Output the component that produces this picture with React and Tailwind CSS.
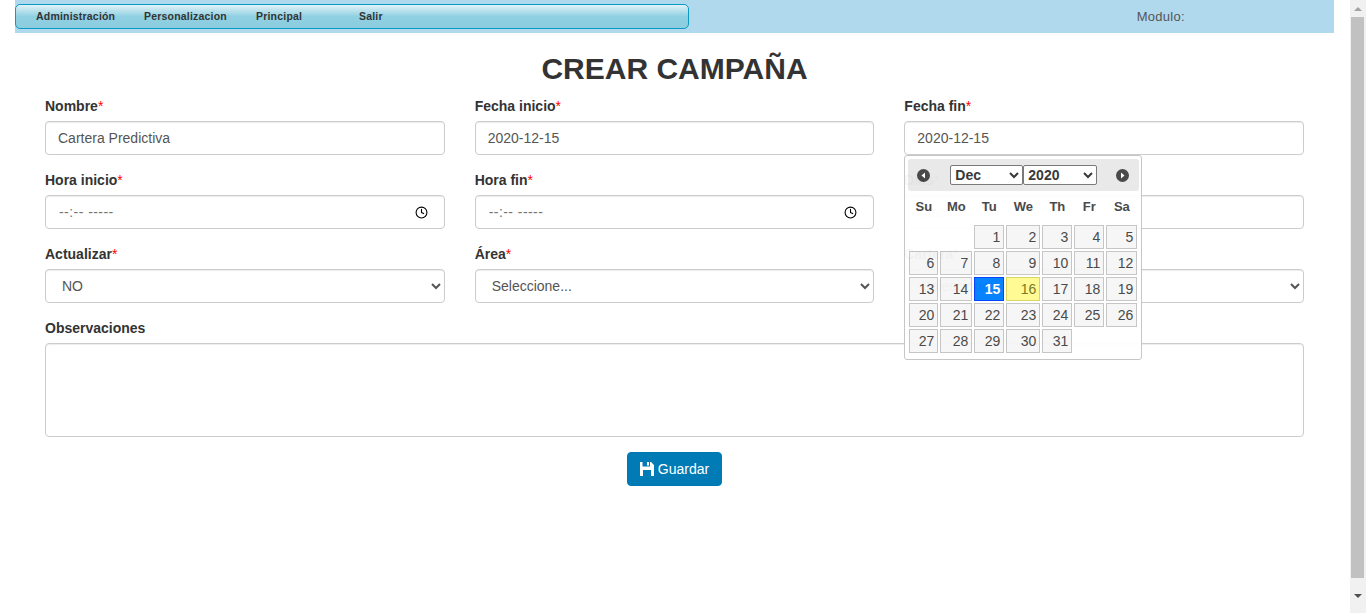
import { Clock } from "lucide-react";

const inputClass =
  "block w-full h-[34px] px-3 text-sm text-[#555] bg-white border border-[#ccc] rounded-[4px] shadow-[inset_0_1px_1px_rgba(0,0,0,0.075)]";

const weekDays = ["Su", "Mo", "Tu", "We", "Th", "Fr", "Sa"];
const days = Array.from({ length: 31 }, (_, i) => i + 1);

const Field = ({ label, required, children, className = "" }) => (
  <div className={`pt-[1px] ${className}`}>
    <label className="block h-5 mb-[5px] text-sm leading-5 font-bold text-[#333]">
      {label}
      {required && <span className="font-normal text-[#f00]">*</span>}
    </label>
    {children}
  </div>
);

const TimeInput = () => (
  <div className={`${inputClass} flex items-center justify-between pr-4`}>
    <span className="pl-[1px] tracking-[0.45px] whitespace-pre text-[#757575]">--:-- -----</span>
    <Clock size={13} strokeWidth={2} className="text-black" />
  </div>
);

const CircleArrow = ({ right }) => (
  <svg width="13" height="13" viewBox="0 0 13 13">
    <circle cx="6.5" cy="6.5" r="6.5" fill="#454545" />
    <path d={right ? "M5 3.5 8.5 6.5 5 9.5Z" : "M8 3.5 4.5 6.5 8 9.5Z"} fill="#fff" />
  </svg>
);

const SaveIcon = () => (
  <svg width="14" height="14" viewBox="0 0 14 14" fill="#fff">
    <path
      fillRule="evenodd"
      d="M0 0H2.5V4.5H10V0H11L14 3V14H0ZM3 8V14H11V8ZM7 0H9V3.5H7Z"
    />
  </svg>
);

const dayClass = (day) => {
  if (day === 15) return "border-[#003eff] bg-[#007fff] text-white font-bold";
  if (day === 16) return "border-[#dad55e] bg-[#fffa90] text-[#777620]";
  return "border-[#c5c5c5] bg-[#f6f6f6] text-[#454545]";
};

const Calendar = () => (
  <div className="absolute left-0 top-full z-10 w-[238px] h-[205px] pl-[3px] pr-[2px] pt-[3px] bg-white border border-[#c5c5c5] rounded-[3px] opacity-[.97]">
    <div className="flex items-center h-8 bg-[#e9e9e9] rounded-[3px]">
      <div className="w-[42px] pl-[9px]">
        <CircleArrow />
      </div>
      <select className="w-[73px] h-5 text-sm font-bold text-[#333] bg-white border border-[#767676] rounded-[2px]">
        <option>Dec</option>
      </select>
      <select className="w-[74px] h-5 text-sm font-bold text-[#333] bg-white border border-[#767676] rounded-[2px]">
        <option>2020</option>
      </select>
      <div className="ml-[19px]">
        <CircleArrow right />
      </div>
    </div>
    <div className="grid grid-cols-[29px_32px_30px_34px_30px_30px_31px] gap-x-[2px] pl-[1px]">
      {weekDays.map((d) => (
        <div key={d} className="h-[34px] text-[13px] leading-[32px] font-bold text-center text-[#454545]">
          {d}
        </div>
      ))}
    </div>
    <div className="grid grid-cols-[29px_32px_30px_34px_30px_30px_31px] auto-rows-[24px] gap-[2px] pl-[1px]">
      <div className="col-span-2" />
      {days.map((day) => (
        <div key={day} className={`border pr-[3px] text-sm leading-[23px] text-right ${dayClass(day)}`}>
          {day}
        </div>
      ))}
    </div>
  </div>
);

const Scrollbar = () => (
  <div className="flex flex-col w-4 h-full bg-[#f1f1f1]">
    <div className="flex items-center justify-center h-[17px]">
      <div className="w-0 h-0 border-x-[4px] border-b-[4px] border-x-transparent border-b-[#a3a3a3]" />
    </div>
    <div className="w-[13px] h-[561px] ml-[1px] bg-[#c1c1c1]" />
    <div className="flex items-center justify-center flex-1">
      <div className="w-0 h-0 border-x-[4px] border-t-[4px] border-x-transparent border-t-[#505050]" />
    </div>
  </div>
);

export default function App() {
  return (
    <div className="flex h-[613px] overflow-hidden bg-white font-['Liberation_Sans',Arial,sans-serif]">
      <div className="w-[1350px] pl-[15px] pr-4">
        <nav className="flex items-center justify-between h-[33px] bg-[#b0d9ee]">
          <ul className="flex items-center w-[674px] h-[25px] text-[10.5px] font-bold tracking-[0.2px] text-[#333] border-[1.5px] border-[#0b9ac4] rounded-[5px] bg-gradient-to-b from-[#e0f2f7] via-[#8fd0e2] via-50% to-[#8bcddf]">
            <li className="w-[128px] pl-5">Administración</li>
            <li className="w-[112px]">Personalizacion</li>
            <li className="w-[103px]">Principal</li>
            <li>Salir</li>
          </ul>
          <span className="mr-[149px] text-[13px] tracking-[0.3px] text-[#555]">Modulo:</span>
        </nav>

        <main className="px-[30px]">
          <h1 className="pt-[17px] pb-[7px] text-[30px] leading-[38px] font-bold text-center text-[#333]">
            CREAR CAMPAÑA
          </h1>
          <form className="grid grid-cols-3 gap-x-[30px] gap-y-[14px]">
            <Field label="Nombre" required>
              <input className={inputClass} defaultValue="Cartera Predictiva" />
            </Field>
            <Field label="Fecha inicio" required>
              <input className={inputClass} defaultValue="2020-12-15" />
            </Field>
            <Field label="Fecha fin" required className="relative">
              <input className={inputClass} defaultValue="2020-12-15" />
              <Calendar />
            </Field>

            <Field label="Hora inicio" required>
              <TimeInput />
            </Field>
            <Field label="Hora fin" required>
              <TimeInput />
            </Field>
            <Field label="Días" required>
              <input className={inputClass} placeholder="Días" />
            </Field>

            <Field label="Actualizar" required>
              <select className={inputClass}>
                <option>NO</option>
              </select>
            </Field>
            <Field label="Área" required>
              <select className={inputClass}>
                <option>Seleccione...</option>
              </select>
            </Field>
            <Field label="Cartera" required>
              <select className={inputClass}>
                <option>Seleccione...</option>
              </select>
            </Field>

            <Field label="Observaciones" className="col-span-3">
              <textarea className={`${inputClass} h-[94px] resize-none`} />
            </Field>
          </form>
          <div className="flex justify-center mt-[15px]">
            <button
              type="button"
              className="flex items-center gap-1 h-[34px] px-3 text-sm text-white bg-[#007bb5] border border-[#0079b3] rounded-[4px]"
            >
              <SaveIcon />
              Guardar
            </button>
          </div>
        </main>
      </div>
      <Scrollbar />
    </div>
  );
}
